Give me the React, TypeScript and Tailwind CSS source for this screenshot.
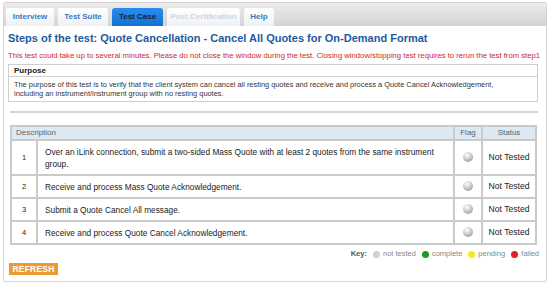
import React from "react";

const rows = [
  { n: "1", d: "Over an iLink connection, submit a two-sided Mass Quote with at least 2 quotes from the same instrument group." },
  { n: "2", d: "Receive and process Mass Quote Acknowledgement." },
  { n: "3", d: "Submit a Quote Cancel All message." },
  { n: "4", d: "Receive and process Quote Cancel Acknowledgement." },
];

function Ball({ size = 10 }: { size?: number }) {
  return (
    <span
      className="inline-block rounded-full"
      style={{
        width: size,
        height: size,
        background: "radial-gradient(circle at 40% 30%, #ffffff 0%, #d8d8d8 35%, #9a9a9a 85%, #888 100%)",
      }}
    />
  );
}

function Dot({ c }: { c: string }) {
  return <span className="inline-block w-[7px] h-[7px] rounded-full mr-[3px]" style={{ background: c }} />;
}

export default function App() {
  const tab = "h-[18px] flex items-center justify-center whitespace-nowrap rounded-t-[3px] text-[8px] font-bold";
  return (
    <div className="w-[550px] h-[285px] bg-white pt-[2px] px-[3px] pb-[3px]" style={{ fontFamily: '"Liberation Sans", Arial, sans-serif' }}>
      <div className="h-full border border-[#d4d4d4] rounded-[2px] flex flex-col">
        <div className="h-[23px] bg-gradient-to-b from-[#ececec] to-[#d4d4d4] flex items-end gap-[4px] pl-[2px]">
          <div className={`${tab} bg-gradient-to-b from-[#ffffff] to-[#eef2f6] text-[#3d78bd] w-[48px]`}>Interview</div>
          <div className={`${tab} bg-gradient-to-b from-[#ffffff] to-[#eef2f6] text-[#3d78bd] w-[50px]`}>Test Suite</div>
          <div className={`${tab} bg-gradient-to-b from-[#2a8cf0] to-[#1470d0] text-[#12243c] w-[51px]`}>Test Case</div>
          <div className={`${tab} bg-gradient-to-b from-[#ffffff] to-[#eef2f6] text-[#cfd6de] w-[73px]`}>Post Certification</div>
          <div className={`${tab} bg-gradient-to-b from-[#ffffff] to-[#eef2f6] text-[#3d78bd] w-[30px]`}>Help</div>
        </div>
        <div className="px-[4px] flex flex-col flex-1">
          <div className="mt-[5px] text-[11px] font-bold text-[#1e5aa0] leading-[14px] whitespace-nowrap">
            Steps of the test: Quote Cancellation - Cancel All Quotes for On-Demand Format
          </div>
          <div className="mt-[6px] text-[7.7px] text-[#d0262b] leading-[10px] whitespace-nowrap">
            This test could take up to several minutes. Please do not close the window during the test. Closing window/stopping test requires to rerun the test from step1
          </div>
          <div className="mt-[3px] w-[530px] border border-[#cfcfcf]">
            <div className="h-[12px] border-b border-[#cfcfcf] px-[5px] text-[8px] font-bold text-[#222] leading-[12px]">Purpose</div>
            <div className="px-[5px] py-[3px] text-[7.4px] text-[#333] leading-[9px]">
              The purpose of this test is to verify that the client system can cancel all resting quotes and receive and process a Quote Cancel Acknowledgement,
              <br />
              including an instrument/instrument group with no resting quotes.
            </div>
          </div>
          <div className="mt-[9px] ml-[2px] w-[528px] h-[2px] bg-[#d6d6d6]" />
          <table className="mt-[12px] ml-[2px] w-[527px] border-collapse border-2 border-[#cacaca] text-[8.3px] text-[#222]">
            <thead>
              <tr className="bg-[#dce8f2] h-[14px]">
                <th colSpan={2} className="border-2 border-[#cacaca] text-left font-normal text-[#666] text-[8px] px-[4px] leading-[10px]">Description</th>
                <th className="border-2 border-[#cacaca] w-[28px] font-normal text-[#666] text-[8px] leading-[10px]">Flag</th>
                <th className="border-2 border-[#cacaca] w-[54px] font-normal text-[#666] text-[8px] leading-[10px]">Status</th>
              </tr>
            </thead>
            <tbody>
              {rows.map((r) => (
                <tr key={r.n} className={r.n === "1" ? "h-[35px]" : "h-[23px]"}>
                  <td className="border-2 border-[#cacaca] w-[26px] text-center text-[7.5px]">{r.n}</td>
                  <td className="border-2 border-[#cacaca] pl-[7px] pr-[8px] leading-[12px]">{r.d}</td>
                  <td className="border-2 border-[#cacaca] text-center">
                    <span className="inline-flex pt-[3px]"><Ball /></span>
                  </td>
                  <td className="border-2 border-[#cacaca] text-center text-[8.6px] text-[#222]">Not Tested</td>
                </tr>
              ))}
            </tbody>
          </table>
          <div className="mt-[4px] w-[531px] flex justify-end items-center text-[7.5px] text-[#888] gap-[6px] leading-[10px]">
            <span className="font-bold text-[#555]">Key:</span>
            <span className="flex items-center"><Dot c="#d0d0d0" />not tested</span>
            <span className="flex items-center"><Dot c="#1e9a1e" />complete</span>
            <span className="flex items-center"><Dot c="#f2ec1a" />pending</span>
            <span className="flex items-center"><Dot c="#e3202a" />failed</span>
          </div>
          <div className="mt-[4px] ml-[1px] w-[49px] h-[12px] bg-[#e99a30] text-white text-[8.5px] font-bold flex items-center justify-center tracking-[0.2px]">
            REFRESH
          </div>
        </div>
      </div>
    </div>
  );
}
